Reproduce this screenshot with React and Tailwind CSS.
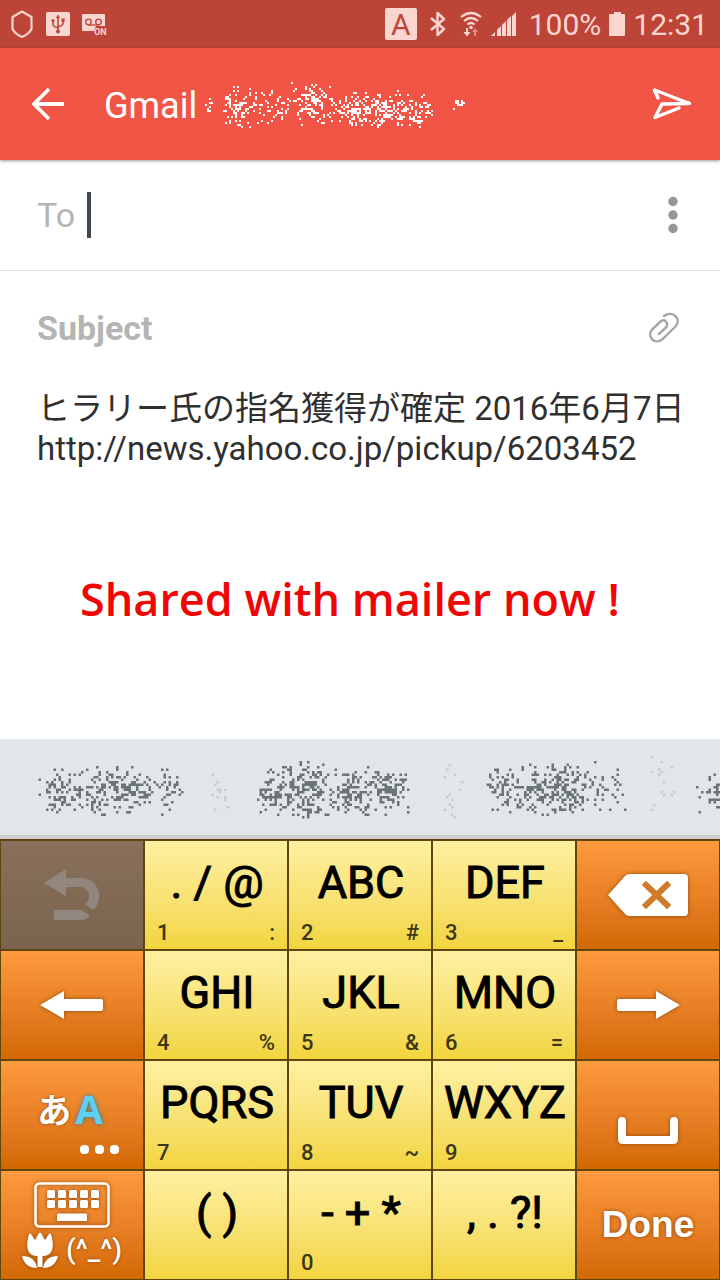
import { useState } from "react";
import clsx from "clsx";

// small seeded generator so the speckles stay the same on every render
const createRandom = (seed) => {
  let s = seed;
  return () => {
    s = (s * 16807) % 2147483647;
    return s / 2147483647;
  };
};

// blobs: [centerX, centerY, radiusX, radiusY, dots]
const Speckles = ({ width, height, blobs, cell, seed, className }) => {
  const random = createRandom(seed);
  const cells = new Set();
  blobs.forEach(([cx, cy, rx, ry, dots]) => {
    for (let i = 0; i < dots; i++) {
      const x = cx + (random() + random() - 1) * rx * 1.2;
      const y = cy + (random() + random() - 1) * ry * 1.2;
      cells.add(`${Math.round(x / cell)},${Math.round(y / cell)}`);
    }
  });
  const d = [...cells]
    .map((key) => {
      const [x, y] = key.split(",").map((n) => n * cell);
      return `M${x} ${y}h${cell}v${cell}h-${cell}z`;
    })
    .join("");

  return (
    <svg
      width={width}
      height={height}
      viewBox={`0 0 ${width} ${height}`}
      className={clsx("shrink-0", className)}
      aria-hidden="true"
    >
      <path d={d} fill="currentColor" />
    </svg>
  );
};

const ShieldIcon = () => (
  <svg width="24" height="30" viewBox="0 0 24 30" fill="none" aria-hidden="true">
    <path
      d="M12 2.500 L21.500 8 V20 Q19 25 12 28 Q5 25 2.500 20 V8Z"
      stroke="currentColor"
      strokeWidth="2.200"
      strokeLinejoin="round"
    />
  </svg>
);

const UsbIcon = () => (
  <svg width="24" height="24" viewBox="0 0 24 24" fill="none" aria-hidden="true">
    <rect width="24" height="24" rx="2" fill="currentColor" />
    <g stroke="#bd4537" strokeWidth="1.600">
      <path d="M12 5v14M7 9v3.500q0 2 5 3.500M17 8v3.500q0 2-5 3.500" />
    </g>
    <g fill="#bd4537">
      <path d="M12 2.500l2.200 3.500H9.800z" />
      <circle cx="7" cy="8.500" r="1.600" />
      <rect x="15.500" y="6.500" width="3.200" height="3.200" />
      <circle cx="12" cy="19.500" r="2" />
    </g>
  </svg>
);

const VoicemailIcon = () => (
  <svg width="26" height="24" viewBox="0 0 26 24" fill="none" aria-hidden="true">
    <path d="M1 2h21q1 0 1 1v11H14l-2 5H1q-1 0-1-1V3q0-1 1-1z" fill="currentColor" />
    <g stroke="#bd4537" strokeWidth="1.300">
      <circle cx="6.500" cy="10" r="2.800" />
      <circle cx="16.500" cy="10" r="2.800" />
      <path d="M6.500 13h10" />
    </g>
    <text
      x="12"
      y="23"
      fontSize="9"
      fontWeight="700"
      fontFamily="Roboto, sans-serif"
      fill="currentColor"
    >
      ON
    </text>
  </svg>
);

const BluetoothIcon = () => (
  <svg width="18" height="26" viewBox="0 0 18 26" fill="none" aria-hidden="true">
    <path
      d="M2 7l13 11-6.500 6V2L15 8 2 19"
      stroke="currentColor"
      strokeWidth="2.400"
      strokeLinejoin="round"
    />
  </svg>
);

const WifiIcon = () => (
  <svg width="24" height="26" viewBox="0 0 24 26" fill="none" aria-hidden="true">
    <g stroke="currentColor" strokeWidth="2.200">
      <path d="M2 6q10-8 20 0" />
      <path d="M5 10q7-6 14 0" />
      <path d="M8.500 13.500q3.500-3 7 0" />
    </g>
    <circle cx="12" cy="16.500" r="1.800" fill="currentColor" />
    <path d="M7 17h2v4h2.500L8 25.500 4.500 21H7z" fill="currentColor" />
    <path d="M15 25h2v-4h2L16 17l-3 4h2z" fill="currentColor" opacity=".5" />
  </svg>
);

const SignalIcon = () => (
  <svg width="26" height="26" viewBox="0 0 26 26" fill="currentColor" aria-hidden="true">
    <path d="M0 25l4-4v4zM6 19l4-4v10H6zM11 14l4-4v15h-4zM16 9l4-4v20h-4zM21 5l4-4v24h-4z" />
  </svg>
);

const BatteryIcon = () => (
  <svg width="16" height="24" viewBox="0 0 16 24" fill="currentColor" aria-hidden="true">
    <path d="M5 0h7v2h3q1 0 1 1v20q0 1-1 1H1q-1 0-1-1V3q0-1 1-1h4z" />
  </svg>
);

const BackIcon = () => (
  <svg width="34" height="34" viewBox="0 0 34 34" fill="none" aria-hidden="true">
    <path d="M19 2L4 17l15 15M4 17h30" stroke="currentColor" strokeWidth="3.800" />
  </svg>
);

const SendIcon = () => (
  <svg width="42" height="34" viewBox="0 0 42 34" fill="none" aria-hidden="true">
    <path
      d="M8 11L4.500 3 39.500 16.500 12 17 5 30.500 29 21"
      stroke="currentColor"
      strokeWidth="3.400"
      strokeLinejoin="round"
      strokeLinecap="round"
    />
  </svg>
);

const MoreIcon = () => (
  <svg width="10" height="38" viewBox="0 0 10 38" fill="currentColor" aria-hidden="true">
    <circle cx="5" cy="5.500" r="4.700" />
    <circle cx="5" cy="19" r="4.700" />
    <circle cx="5" cy="32.500" r="4.700" />
  </svg>
);

const ClipIcon = () => (
  <svg width="32" height="32" viewBox="0 0 32 32" fill="none" aria-hidden="true">
    <path
      d="M11 22L18 15.500C21 11.500 17 6 12.500 9.500L4.500 17C-2 24 6.500 33.500 14 27.500L27 15C34.500 7 24.500-2.500 16 4"
      stroke="currentColor"
      strokeWidth="2.400"
      strokeLinecap="round"
    />
  </svg>
);

const UndoIcon = () => (
  <svg width="60" height="56" viewBox="0 0 60 56" aria-hidden="true">
    <g fill="#91877f">
      <path d="M2 16L24 2v9h14c12 0 19 8 19 18 0 6-2 11-6 14l-8-6c3-2 4-5 4-8 0-5-3-9-9-9H24v9z" />
      <path d="M12 43h27l9 5q-3 5-9 5H12z" />
    </g>
  </svg>
);

const ArrowIcon = ({ className }) => (
  <svg
    width="66"
    height="32"
    viewBox="0 0 66 32"
    className={clsx("drop-shadow-[0_0_2px_#8a4a10]", className)}
    aria-hidden="true"
  >
    <path d="M1 16L25 2v8h37q2 0 2 2v8q0 2-2 2H25v8z" fill="#fff" />
  </svg>
);

const DeleteIcon = () => (
  <svg
    width="82"
    height="46"
    viewBox="0 0 82 46"
    className="drop-shadow-[0_0_2px_#8a4a10]"
    aria-hidden="true"
  >
    <path d="M1 23L18 4q2-2 5-2h54q4 0 4 4v34q0 4-4 4H23q-3 0-5-2z" fill="#fff" />
    <path
      d="M39 13L60 33M60 13L39 33"
      stroke="#cd7a2b"
      strokeWidth="6"
      strokeLinecap="square"
    />
  </svg>
);

const SpaceIcon = () => (
  <svg
    width="62"
    height="30"
    viewBox="0 0 62 30"
    className="drop-shadow-[0_0_2px_#8a4a10]"
    aria-hidden="true"
  >
    <path
      d="M5 5v18q0 1 1 1h50q1 0 1-1V5"
      stroke="#fff"
      strokeWidth="8"
      strokeLinecap="round"
      strokeLinejoin="round"
      fill="none"
    />
  </svg>
);

const KeyboardIcon = () => (
  <svg
    width="76"
    height="46"
    viewBox="0 0 76 46"
    className="drop-shadow-[0_0_2px_#8a4a10]"
    aria-hidden="true"
  >
    <rect x="1.500" y="1.500" width="73" height="43" rx="4" fill="none" stroke="#fff" strokeWidth="2.500" />
    {[0, 1, 2, 3, 4].map((col) => (
      <g key={col} fill="#fff">
        <rect x={13 + col * 11} y="8" width="8" height="8" rx="1.500" />
        <rect x={13 + col * 11} y="18" width="8" height="8" rx="1.500" />
      </g>
    ))}
    <rect x="23" y="31.500" width="30" height="7.500" rx="1" fill="#fff" />
  </svg>
);

const TulipIcon = () => (
  <svg
    width="36"
    height="36"
    viewBox="0 0 36 36"
    className="drop-shadow-[0_0_2px_#8a4a10]"
    fill="#fff"
    aria-hidden="true"
  >
    <path d="M7 2q1-1 2 0l4 6 4-7q1-1 2 0l4 7 4-6q1-1 2 0 3 10 1 16-2 6-9.500 6V35h-5V24Q8 24 6 18 4 12 7 2z" />
    <path d="M0 24q13 0 15 12Q3 36 0 24zM36 24q-13 0-15 12 12 0 15-12z" />
  </svg>
);

const suggestions = [
  {
    width: 148,
    seed: 77,
    blobs: [
      [24, 50, 20, 20, 85],
      [62, 49, 22, 26, 75],
      [94, 48, 22, 20, 95],
      [130, 48, 20, 22, 45],
    ],
  },
  {
    width: 164,
    seed: 412,
    blobs: [
      [24, 50, 20, 22, 85],
      [54, 48, 22, 26, 150],
      [98, 50, 16, 22, 100],
      [134, 48, 22, 22, 115],
    ],
  },
  {
    width: 144,
    seed: 931,
    blobs: [
      [16, 48, 18, 24, 55],
      [52, 48, 26, 22, 130],
      [84, 46, 18, 22, 100],
      [118, 48, 22, 24, 40],
    ],
  },
  { width: 48, seed: 58, blobs: [[24, 50, 24, 20, 60]] },
];

const keys = [
  { id: "undo", kind: "disabled" },
  { label: ". / @", left: "1", right: ":" },
  { label: "ABC", left: "2", right: "#" },
  { label: "DEF", left: "3", right: "_" },
  { id: "delete", kind: "action" },
  { id: "left", kind: "action" },
  { label: "GHI", left: "4", right: "%" },
  { label: "JKL", left: "5", right: "&" },
  { label: "MNO", left: "6", right: "=" },
  { id: "right", kind: "action" },
  { id: "mode", kind: "action" },
  { label: "PQRS", left: "7" },
  { label: "TUV", left: "8", right: "~" },
  { label: "WXYZ", left: "9" },
  { id: "space", kind: "action" },
  { id: "symbols", kind: "action" },
  { label: "( )" },
  { label: "- + *", left: "0" },
  { label: ", . ?!" },
  { id: "done", kind: "action" },
];

const actionContent = {
  undo: <UndoIcon />,
  delete: <DeleteIcon />,
  left: <ArrowIcon />,
  right: <ArrowIcon className="rotate-180" />,
  space: (
    <span className="pt-8">
      <SpaceIcon />
    </span>
  ),
  mode: (
    <span className="flex flex-col gap-4 pt-3 pl-3 text-white">
      <span className="flex items-center gap-1 pr-4 text-[34px] leading-10 font-bold [text-shadow:0_0_3px_#8a4a10]">
        <span className="font-['Noto_Sans_CJK_JP',sans-serif]">あ</span>
        <span className="font-['Open_Sans',sans-serif] text-[40px] text-[#5fd0f5] [text-shadow:0_0_5px_#2f7f96]">
          A
        </span>
      </span>
      <span className="flex gap-1.5 self-end">
        <i className="size-[9px] rounded-sm bg-white" />
        <i className="size-[9px] rounded-sm bg-white" />
        <i className="size-[9px] rounded-sm bg-white" />
      </span>
    </span>
  ),
  symbols: (
    <span className="flex flex-col items-center gap-1 text-white">
      <KeyboardIcon />
      <span className="flex items-center gap-2">
        <TulipIcon />
        <span className="text-[28px] leading-9 font-medium [text-shadow:0_0_3px_#8a4a10]">(^_^)</span>
      </span>
    </span>
  ),
  done: (
    <span className="font-['Liberation_Sans',sans-serif] text-[37px] font-bold text-white [text-shadow:0_0_4px_#8a4a10]">
      Done
    </span>
  ),
};

const Key = ({ id, kind, label, left, right }) => {
  if (kind) {
    return (
      <button
        aria-label={id}
        disabled={kind === "disabled"}
        className={clsx(
          "flex h-[108px] items-center justify-center bg-linear-to-b",
          kind === "disabled" ? "from-[#88705c] to-[#7b644d]" : "from-[#ff9a3e] to-[#d36800]"
        )}
      >
        {actionContent[id]}
      </button>
    );
  }
  return (
    <button className="flex h-[108px] flex-col bg-linear-to-b from-[#fff0a2] to-[#f2d53c] text-black">
      <span className="w-full pl-0.5 text-center text-[45px] leading-[84px] whitespace-nowrap [-webkit-text-stroke:1px_black]">
        {label}
      </span>
      <span className="flex w-full justify-between px-3 text-[22px] leading-4 font-medium text-[#3d3612]">
        <span>{left}</span>
        <span>{right}</span>
      </span>
    </button>
  );
};

const StatusBar = () => (
  <div className="flex h-12 items-center justify-between bg-[#bd4537] pr-3 pl-2.5 text-[#fbd5d0]">
    <div className="flex items-center gap-3">
      <ShieldIcon />
      <UsbIcon />
      <VoicemailIcon />
    </div>
    <div className="flex items-center text-[30px]">
      <span className="mr-3 flex size-8 items-center justify-center rounded-xs bg-[#fbd5d0] text-[30px] text-[#bd4537]">
        A
      </span>
      <BluetoothIcon />
      <span className="ml-3 flex items-center gap-2">
        <WifiIcon />
        <SignalIcon />
        <span className="pl-1">100%</span>
        <BatteryIcon />
        <span>12:31</span>
      </span>
    </div>
  </div>
);

const App = () => {
  const [to, setTo] = useState("");
  const [subject, setSubject] = useState("");
  const [body, setBody] = useState(
    "ヒラリー氏の指名獲得が確定 2016年6月7日\nhttp://news.yahoo.co.jp/pickup/6203452"
  );

  return (
    <div className="flex min-h-screen flex-col bg-white font-[Roboto,'Noto_Sans_CJK_JP',sans-serif]">
      <StatusBar />

      <header className="flex h-28 items-center bg-[#f05545] pr-7 pl-[30px] text-white shadow-[0_1px_3px_#00000066]">
        <button aria-label="Back">
          <BackIcon />
        </button>
        <h1 className="pt-1 pl-10 text-[36px]">Gmail</h1>
        <Speckles
          width={270}
          height={60}
          cell={2}
          seed={2016}
          className="ml-1"
          blobs={[
            [8, 30, 4, 8, 9],
            [36, 32, 16, 18, 85],
            [70, 32, 18, 16, 50],
            [112, 28, 24, 20, 115],
            [154, 34, 20, 16, 110],
            [182, 36, 18, 16, 95],
            [212, 34, 20, 16, 85],
            [258, 28, 5, 6, 14],
          ]}
        />
        <button aria-label="Send" className="ml-auto">
          <SendIcon />
        </button>
      </header>

      <main className="flex flex-1 flex-col text-[34px]">
        <div className="flex h-[111px] items-center border-b border-[#e0e0e0] pr-[42px] pl-[37px]">
          <label htmlFor="to" className="pr-3 text-[#b5b5b5]">
            To
          </label>
          <span className="h-[46px] w-1 bg-[#3f494f]" />
          <input
            id="to"
            value={to}
            onChange={(e) => setTo(e.target.value)}
            className="min-w-0 flex-1 outline-none"
          />
          <button aria-label="More options" className="text-[#969696]">
            <MoreIcon />
          </button>
        </div>

        <div className="flex h-[114px] items-center pr-10 pl-[37px]">
          <input
            aria-label="Subject"
            placeholder="Subject"
            value={subject}
            onChange={(e) => setSubject(e.target.value)}
            className="min-w-0 flex-1 font-bold outline-none placeholder:text-[#b5b5b5]"
          />
          <button aria-label="Attach file" className="text-[#a5a5a5]">
            <ClipIcon />
          </button>
        </div>

        <textarea
          aria-label="Message"
          rows={2}
          value={body}
          onChange={(e) => setBody(e.target.value)}
          className="w-full resize-none overflow-hidden pt-1 pl-[37px] text-[33px] leading-10 text-[#303030] outline-none"
        />

        <p className="pt-24 pl-20 font-['Open_Sans',sans-serif] text-[45px] font-semibold text-[#f00505]">
          Shared with mailer now !
        </p>
      </main>

      <section>
        <div className="flex h-[100px] items-center gap-5 overflow-hidden border-b-4 border-[#cfcdcd] bg-[#e2e6e9] pl-9">
          {suggestions.map((item, i) => (
            <div key={item.seed} className="flex shrink-0 items-center gap-5">
              <button aria-label={`Suggestion ${i + 1}`}>
                <Speckles {...item} height={92} cell={2.5} className="text-[#6b7478]" />
              </button>
              {i < suggestions.length - 1 && (
                <Speckles
                  width={28}
                  height={92}
                  cell={2.5}
                  seed={item.seed + 5}
                  blobs={[[14, 46, 12, 30, 14]]}
                  className="text-[#c8cccf]"
                />
              )}
            </div>
          ))}
        </div>
        <div className="grid grid-cols-5 gap-0.5 bg-[#5f460f] p-px pt-0.5">
          {keys.map((key) => (
            <Key key={key.id || key.label} {...key} />
          ))}
        </div>
      </section>
    </div>
  );
};

export default App;
